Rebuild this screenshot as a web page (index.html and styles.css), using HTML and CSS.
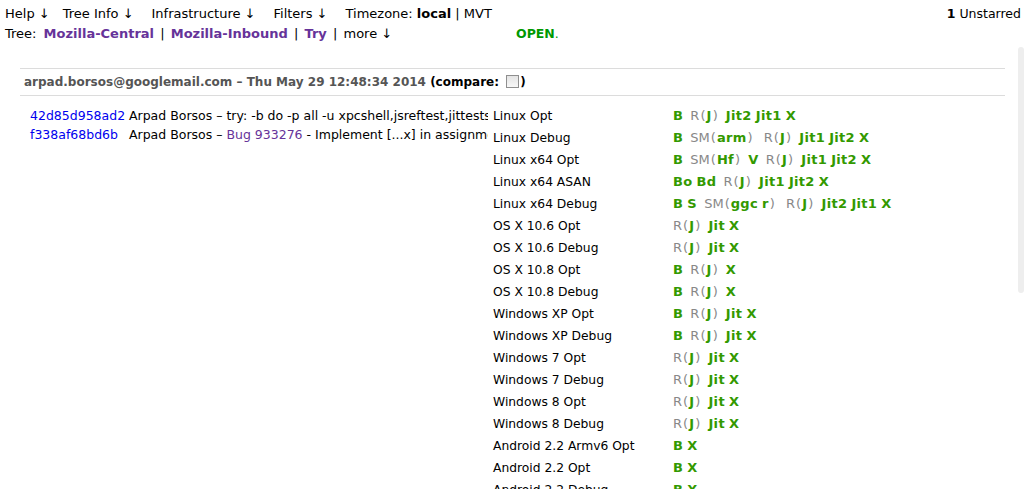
FILE: index.html
```html
<!DOCTYPE html>
<html>
<head>
<meta charset="utf-8">
<link rel="stylesheet" href="styles.css">
</head>
<body>
<div class="topbar">
  <div class="navline">
    <span class="menu">Help ↓</span>
    <span class="menu">Tree Info ↓</span>
    <span class="menu">Infrastructure ↓</span>
    <span class="menu">Filters ↓</span>
    <span class="menu">Timezone: <b>local</b> | MVT</span>
    <span class="unstarred"><b>1</b> Unstarred</span>
  </div>
  <div class="treeline">
    <span class="trees">Tree: <a class="tree first">Mozilla-Central</a> <span class="sep">|</span> <a class="tree">Mozilla-Inbound</a> <span class="sep">|</span> <a class="tree">Try</a> <span class="sep">|</span> more ↓</span>
    <span class="status"><b>OPEN</b>.</span>
  </div>
</div>

<div class="push">
  <div class="pushhead">
    <span class="author">arpad.borsos@googlemail.com – Thu May 29 12:48:34 2014</span>
    <span class="compare">(compare: <span class="cbox"></span>)</span>
  </div>
  <div class="pushbody">
    <ul class="commits">
      <li><a class="rev">42d85d958ad2</a><span class="msg">Arpad Borsos – try: -b do -p all -u xpcshell,jsreftest,jittests,mochitest-1,mochitest-2,mochitest-3 -t none</span></li>
      <li><a class="rev">f338af68bd6b</a><span class="msg">Arpad Borsos – <a class="bug">Bug 933276</a> - Implement [...x] in assignment destructuring</span></li>
    </ul>
    <div class="platforms">
      <div class="prow"><span class="pname">Linux Opt</span><span class="res"><b>B</b> <span class="g">R<i>(</i><b>J</b><i>)</i></span> <b>Jit2</b> <b>Jit1</b> <b>X</b></span></div>
      <div class="prow"><span class="pname">Linux Debug</span><span class="res"><b>B</b> <span class="g">SM<i>(</i><b>arm</b><i>)</i></span> <span class="g">R<i>(</i><b>J</b><i>)</i></span> <b>Jit1</b> <b>Jit2</b> <b>X</b></span></div>
      <div class="prow"><span class="pname">Linux x64 Opt</span><span class="res"><b>B</b> <span class="g">SM<i>(</i><b>Hf</b><i>)</i></span> <b>V</b> <span class="g">R<i>(</i><b>J</b><i>)</i></span> <b>Jit1</b> <b>Jit2</b> <b>X</b></span></div>
      <div class="prow"><span class="pname">Linux x64 ASAN</span><span class="res"><b>Bo</b> <b>Bd</b> <span class="g">R<i>(</i><b>J</b><i>)</i></span> <b>Jit1</b> <b>Jit2</b> <b>X</b></span></div>
      <div class="prow"><span class="pname">Linux x64 Debug</span><span class="res"><b>B</b> <b>S</b> <span class="g">SM<i>(</i><b>ggc</b> <b>r</b><i>)</i></span> <span class="g">R<i>(</i><b>J</b><i>)</i></span> <b>Jit2</b> <b>Jit1</b> <b>X</b></span></div>
      <div class="prow"><span class="pname">OS X 10.6 Opt</span><span class="res"><span class="g first">R<i>(</i><b>J</b><i>)</i></span> <b>Jit</b> <b>X</b></span></div>
      <div class="prow"><span class="pname">OS X 10.6 Debug</span><span class="res"><span class="g first">R<i>(</i><b>J</b><i>)</i></span> <b>Jit</b> <b>X</b></span></div>
      <div class="prow"><span class="pname">OS X 10.8 Opt</span><span class="res"><b>B</b> <span class="g">R<i>(</i><b>J</b><i>)</i></span> <b>X</b></span></div>
      <div class="prow"><span class="pname">OS X 10.8 Debug</span><span class="res"><b>B</b> <span class="g">R<i>(</i><b>J</b><i>)</i></span> <b>X</b></span></div>
      <div class="prow"><span class="pname">Windows XP Opt</span><span class="res"><b>B</b> <span class="g">R<i>(</i><b>J</b><i>)</i></span> <b>Jit</b> <b>X</b></span></div>
      <div class="prow"><span class="pname">Windows XP Debug</span><span class="res"><b>B</b> <span class="g">R<i>(</i><b>J</b><i>)</i></span> <b>Jit</b> <b>X</b></span></div>
      <div class="prow"><span class="pname">Windows 7 Opt</span><span class="res"><span class="g first">R<i>(</i><b>J</b><i>)</i></span> <b>Jit</b> <b>X</b></span></div>
      <div class="prow"><span class="pname">Windows 7 Debug</span><span class="res"><span class="g first">R<i>(</i><b>J</b><i>)</i></span> <b>Jit</b> <b>X</b></span></div>
      <div class="prow"><span class="pname">Windows 8 Opt</span><span class="res"><span class="g first">R<i>(</i><b>J</b><i>)</i></span> <b>Jit</b> <b>X</b></span></div>
      <div class="prow"><span class="pname">Windows 8 Debug</span><span class="res"><span class="g first">R<i>(</i><b>J</b><i>)</i></span> <b>Jit</b> <b>X</b></span></div>
      <div class="prow"><span class="pname">Android 2.2 Armv6 Opt</span><span class="res"><b>B</b> <b>X</b></span></div>
      <div class="prow"><span class="pname">Android 2.2 Opt</span><span class="res"><b>B</b> <b>X</b></span></div>
      <div class="prow"><span class="pname">Android 2.2 Debug</span><span class="res"><b>B</b> <b>X</b></span></div>
    </div>
  </div>
</div>
<div class="scrollthumb"></div>
</body>
</html>
```

FILE: styles.css
```css
html, body {
  margin: 0;
  padding: 0;
  background: #fff;
  overflow: hidden;
}
body {
  font-family: "DejaVu Sans", Verdana, sans-serif;
  font-size: 12.3px;
  color: #000;
  height: 489px;
}
.topbar {
  padding: 4px 5px 0 5px;
  font-size: 13px;
}
.navline, .treeline {
  display: flex;
  height: 20px;
  line-height: 20px;
  white-space: nowrap;
}
.menu {
  margin-right: 18px;
}
.menu:first-child {
  margin-right: 13px;
}
.unstarred {
  margin-left: auto;
  font-size: 12.5px;
}
.trees {
  width: 511px;
}
.sep {
  margin: 0 2px;
}
.tree {
  color: #663399;
  font-weight: bold;
}
.tree.first {
  margin-left: 3px;
}
.status {
  color: #009900;
  font-size: 12.5px;
}
.push {
  margin: 24px 21px 0 20px;
}
.pushhead {
  border-top: 1px solid #dcdcdc;
  border-bottom: 1px solid #dcdcdc;
  height: 26px;
  line-height: 27px;
  padding-left: 4px;
  font-size: 12px;
  font-weight: bold;
  white-space: nowrap;
}
.author {
  color: #555;
}
.compare {
  color: #000;
}
.cbox {
  display: inline-block;
  width: 11px;
  height: 11px;
  border: 1px solid #8f8f8f;
  background: linear-gradient(#e4e4e4, #f8f8f8);
  vertical-align: -2px;
  margin-left: 3px;
  margin-right: 1px;
  box-sizing: content-box;
}
.pushbody {
  display: flex;
  padding-top: 9px;
}
.commits {
  list-style: none;
  margin: 0;
  padding: 1px 0 0 10px;
  width: 458px;
  flex: none;
  overflow: hidden;
  white-space: nowrap;
  font-size: 12.5px;
}
.commits li {
  height: 19px;
  line-height: 19px;
}
.rev {
  display: inline-block;
  min-width: 98px;
  color: #0000ee;
}
.msg {
  margin-left: 1px;
}
.bug {
  color: #663399;
}
.platforms {
  margin-left: 5px;
  flex: 1;
}
.prow {
  display: flex;
  height: 22px;
  line-height: 22px;
  white-space: nowrap;
}
.pname {
  width: 180px;
  flex: none;
}
.res {
  color: #339900;
  font-size: 13px;
}
.res b {
  font-weight: bold;
  color: #339900;
  letter-spacing: 0.3px;
}
.res .g {
  color: #888;
  margin: 0 3px 0 3px;
}
.res .g.first {
  margin-left: 0;
}
.res i {
  font-style: normal;
  color: #888;
  margin: 0 1px;
}
.scrollthumb {
  position: absolute;
  left: 1018px;
  top: 47px;
  width: 6px;
  height: 246px;
  border-radius: 3px;
  background: #eeeeee;
}
```
